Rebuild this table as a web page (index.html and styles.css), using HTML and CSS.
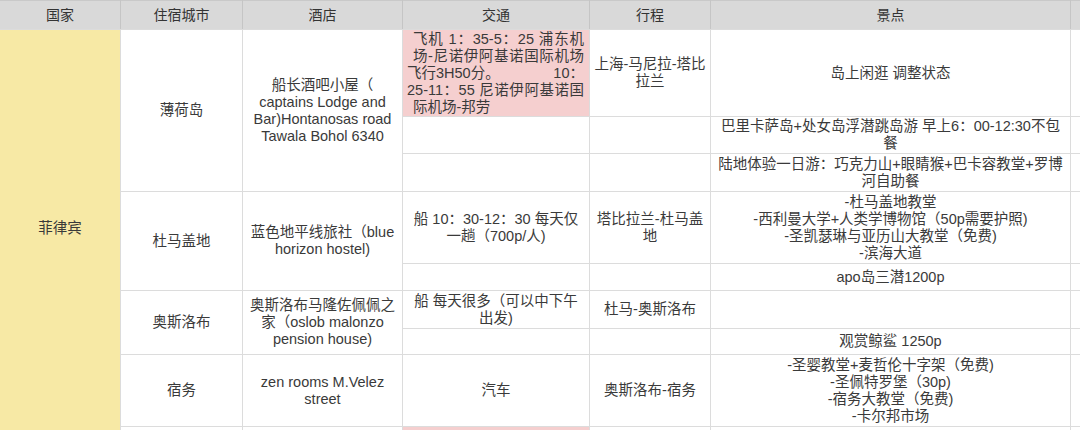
FILE: index.html
```html
<!DOCTYPE html>
<html lang="zh-CN">
<head>
<meta charset="utf-8">
<title>菲律宾行程</title>
<link rel="stylesheet" href="styles.css">
</head>
<body>
<div class="sheet">
  <div class="hd">国家</div>
  <div class="hd">住宿城市</div>
  <div class="hd">酒店</div>
  <div class="hd">交通</div>
  <div class="hd">行程</div>
  <div class="hd">景点</div>
  <div class="hd"></div>

  <div class="c country span9">菲律宾</div>
  <div class="c span3">薄荷岛</div>
  <div class="c span3">船长酒吧小屋（<br>captains Lodge and<br>Bar)Hontanosas road<br>Tawala Bohol 6340</div>
  <div class="c pink flight">
    <div class="ln in">飞机 1：35-5：25 浦东机</div>
    <div class="ln in">场-尼诺伊阿基诺国际机场</div>
    <div class="ln split"><span>飞行3H50分。</span><span>10：</span></div>
    <div class="ln">25-11：55 尼诺伊阿基诺国</div>
    <div class="ln in last">际机场-邦劳</div>
  </div>
  <div class="c">上海-马尼拉-塔比<br>拉兰</div>
  <div class="c">岛上闲逛 调整状态</div>
  <div class="c"></div>

  <div class="c"></div>
  <div class="c"></div>
  <div class="c">巴里卡萨岛+处女岛浮潜跳岛游 早上6：00-12:30不包<br>餐</div>
  <div class="c"></div>

  <div class="c"></div>
  <div class="c"></div>
  <div class="c">陆地体验一日游：巧克力山+眼睛猴+巴卡容教堂+罗博<br>河自助餐</div>
  <div class="c"></div>

  <div class="c span2">杜马盖地</div>
  <div class="c span2">蓝色地平线旅社（blue<br>horizon hostel)</div>
  <div class="c">船 10：30-12：30 每天仅<br>一趟（700p/人)</div>
  <div class="c">塔比拉兰-杜马盖<br>地</div>
  <div class="c">-杜马盖地教堂<br>-西利曼大学+人类学博物馆（50p需要护照)<br>-圣凯瑟琳与亚历山大教堂（免费)<br>-滨海大道</div>
  <div class="c"></div>

  <div class="c"></div>
  <div class="c"></div>
  <div class="c">apo岛三潜1200p</div>
  <div class="c"></div>

  <div class="c span2">奥斯洛布</div>
  <div class="c span2">奥斯洛布马隆佐佩佩之<br>家（oslob malonzo<br>pension house)</div>
  <div class="c">船 每天很多（可以中下午<br>出发)</div>
  <div class="c">杜马-奥斯洛布</div>
  <div class="c"></div>
  <div class="c"></div>

  <div class="c"></div>
  <div class="c"></div>
  <div class="c">观赏鲸鲨 1250p</div>
  <div class="c"></div>

  <div class="c">宿务</div>
  <div class="c">zen rooms M.Velez<br>street</div>
  <div class="c">汽车</div>
  <div class="c">奥斯洛布-宿务</div>
  <div class="c">-圣婴教堂+麦哲伦十字架（免费)<br>-圣佩特罗堡（30p)<br>-宿务大教堂（免费)<br>-卡尔邦市场</div>
  <div class="c"></div>

  <div class="c"></div>
  <div class="c"></div>
  <div class="c pink"></div>
  <div class="c"></div>
  <div class="c"></div>
  <div class="c"></div>
</div>
</body>
</html>
```

FILE: styles.css
```css
html, body {
  margin: 0;
  padding: 0;
  background: #ffffff;
}

body {
  width: 1080px;
  height: 430px;
  overflow: hidden;
  font-family: "Liberation Sans", "Noto Sans CJK SC", sans-serif;
  color: #3a3a3a;
}

.sheet {
  display: grid;
  grid-template-columns: 120px 121px 159px 186px 120px 359px 1fr;
  grid-template-rows: 29px 86px 36px 37px 71px 26px 37px 25px 71px 3px;
  gap: 1px;
  background: #dcdcdc;
  width: 1080px;
  height: 430px;
}

.hd {
  background: #d9d9d9;
  border-top: 1px solid #c9c9c9;
  box-shadow: 1px 0 0 #c5c5c5;
  display: flex;
  align-items: center;
  justify-content: center;
  font-size: 14px;
  line-height: 17px;
  color: #333333;
}

.c {
  background: #ffffff;
  display: flex;
  align-items: center;
  justify-content: center;
  text-align: center;
  font-size: 14.5px;
  line-height: 17px;
  white-space: nowrap;
  padding: 0 3px;
  overflow: visible;
}

.span2 { grid-row: span 2; }
.span3 { grid-row: span 3; }
.span9 { grid-row: span 9; }

.country {
  background: #f7e9a5;
  padding-bottom: 4px;
}

.pink {
  background: #f5cfcf;
}

.flight {
  flex-direction: column;
  align-items: stretch;
  justify-content: center;
  padding: 0 5px 0 4px;
}

.flight .ln {
  text-align: justify;
  text-align-last: justify;
}

.flight .ln.in {
  padding-left: 6px;
}

.flight .ln.split {
  display: flex;
  justify-content: space-between;
}

.flight .ln.last {
  text-align-last: left;
}
```
